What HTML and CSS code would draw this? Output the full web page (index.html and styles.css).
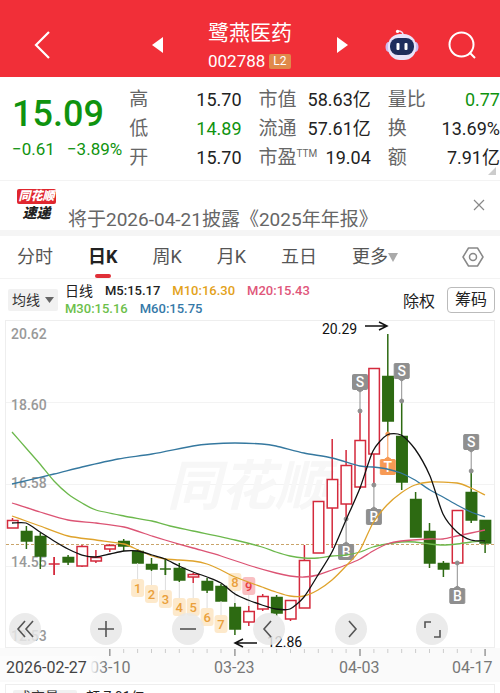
FILE: index.html
```html
<!DOCTYPE html>
<html lang="zh-CN">
<head>
	<meta charset="UTF-8">
	<meta name="viewport" content="width=device-width, initial-scale=1.0">
	<title>鹭燕医药 002788</title>
	<link rel="stylesheet" href="styles.css">
</head>
<body>
	<header class="topbar">
		<button class="icon-button back" aria-label="返回">
			<svg width="18" height="30" viewBox="0 0 18 30"><path d="M16 2 L3 15 L16 28" fill="none" stroke="#fff" stroke-width="2.2"/></svg>
		</button>
		<div class="switcher">
			<button class="icon-button" aria-label="上一只">
				<svg width="11" height="16" viewBox="0 0 11 16"><path d="M11 0 V16 L0 8 Z" fill="#fff"/></svg>
			</button>
			<div class="stock">
				<h1>鹭燕医药</h1>
				<p>002788<span class="level">L2</span></p>
			</div>
			<button class="icon-button" aria-label="下一只">
				<svg width="11" height="16" viewBox="0 0 11 16"><path d="M0 0 V16 L11 8 Z" fill="#fff"/></svg>
			</button>
		</div>
		<div class="tools">
			<button class="icon-button" aria-label="智能助手">
				<svg width="34" height="32" viewBox="0 0 34 32">
					<path d="M18 6 Q18 2 13 2" fill="none" stroke="#f3dcf0" stroke-width="1.6"/>
					<circle cx="12.500" cy="2.400" r="1.600" fill="#fff"/>
					<ellipse cx="3.500" cy="18" rx="3" ry="5" fill="#cdb9ee"/>
					<ellipse cx="30.500" cy="18" rx="3" ry="5" fill="#cdb9ee"/>
					<rect x="3" y="5" width="28" height="26" rx="12" fill="#e8e4fa"/>
					<rect x="5" y="9" width="24" height="17" rx="8" fill="#1e2d5c"/>
					<rect x="11.500" y="14" width="3" height="7" rx="1" fill="#fff"/>
					<rect x="19.500" y="14" width="3" height="7" rx="1" fill="#fff"/>
				</svg>
			</button>
			<button class="icon-button" aria-label="搜索">
				<svg width="28" height="28" viewBox="0 0 28 28"><circle cx="13.500" cy="13.500" r="12" fill="none" stroke="#fff" stroke-width="2"/><path d="M21.500 21.500 L27 27" stroke="#fff" stroke-width="2"/></svg>
			</button>
		</div>
	</header>

	<section class="quote">
		<div class="price">
			<strong>15.09</strong>
			<p><span>−0.61</span><span>−3.89%</span></p>
		</div>
		<dl>
			<div><dt>高</dt><dd>15.70</dd></div>
			<div><dt>低</dt><dd class="down">14.89</dd></div>
			<div><dt>开</dt><dd>15.70</dd></div>
		</dl>
		<dl>
			<div><dt>市值</dt><dd>58.63亿</dd></div>
			<div><dt>流通</dt><dd>57.61亿</dd></div>
			<div><dt>市盈<sup>TTM</sup></dt><dd>19.04</dd></div>
		</dl>
		<dl>
			<div><dt>量比</dt><dd class="down">0.77</dd></div>
			<div><dt>换</dt><dd>13.69%</dd></div>
			<div><dt>额</dt><dd>7.91亿</dd></div>
		</dl>
	</section>

	<section class="news">
		<div class="news-logo"><b>同花顺</b><i>速递</i></div>
		<a href="#report">将于2026-04-21披露《2025年年报》</a>
		<button class="icon-button news-close" aria-label="关闭">
			<svg width="12" height="12" viewBox="0 0 12 12"><path d="M1 1 L11 11 M11 1 L1 11" stroke="#888" stroke-width="1.2"/></svg>
		</button>
	</section>

	<nav class="tabs">
		<button>分时</button>
		<button class="active">日K</button>
		<button>周K</button>
		<button>月K</button>
		<button>五日</button>
		<button>更多<svg width="10" height="9" viewBox="0 0 10 9"><path d="M0 0 H10 L5 9 Z" fill="#aaa"/></svg></button>
		<button class="settings" aria-label="设置">
			<svg width="22" height="20" viewBox="0 0 22 20"><path d="M6.500 1 H15.500 L21 10 L15.500 19 H6.500 L1 10 Z" fill="none" stroke="#888" stroke-width="1.5" stroke-linejoin="round"/><circle cx="11" cy="10" r="3.500" fill="none" stroke="#888" stroke-width="1.5"/></svg>
		</button>
	</nav>

	<section class="legend">
		<button class="picker">均线<svg width="9" height="6" viewBox="0 0 9 6"><path d="M0 0 H9 L4.500 6 Z" fill="#666"/></svg></button>
		<div class="averages">
			<p><span class="period">日线</span><span class="m5">M5:15.17</span><span class="m10">M10:16.30</span><span class="m20">M20:15.43</span></p>
			<p><span class="m30">M30:15.16</span><span class="m60">M60:15.75</span></p>
		</div>
		<button class="adjust">除权</button>
		<button class="chips">筹码</button>
	</section>

	<section class="chart">
		<svg class="kline" viewBox="0 320 500 362" role="img" aria-label="日K线图">
			<defs>
				<linearGradient id="fade">
					<stop offset="0.85" stop-color="#fcfcfc"/>
					<stop offset="1" stop-color="#fcfcfc" stop-opacity="0"/>
				</linearGradient>
			</defs>
			<rect class="axis-band" x="0" y="648" width="500" height="34"/>
			<rect class="frame" x="5.500" y="320.500" width="489" height="327"/>
			<path class="grid" d="M6 402.500 H494 M6 484.500 H494 M6 566.500 H494"/>
			<text class="watermark" x="167" y="505">同花顺</text>
			<g class="scale">
				<text x="11" y="339">20.62</text>
				<text x="11" y="410">18.60</text>
				<text x="11" y="488">16.58</text>
				<text x="11" y="567">14.55</text>
				<text x="11" y="641">12.53</text>
			</g>
			<path class="last" d="M6 544.500 H494"/>
			<g id="candles"></g>
			<g id="badges"></g>
			<g id="markers"></g>
			<g id="averages"></g>
			<g class="extreme">
				<text x="322" y="334">20.29</text>
				<path d="M365 326 H387 M379 322 L387 326 L379 330"/>
				<text x="267" y="647">12.86</text>
				<path d="M257 643 H236 M243 639 L235 643 L243 647"/>
			</g>
			<g id="ticks"></g>
			<g class="dates">
				<text x="90" y="673">03-10</text>
				<text x="214" y="673">03-23</text>
				<text x="339" y="673">04-03</text>
				<text x="452" y="673">04-17</text>
				<rect x="0" y="656" width="106" height="24" fill="url(#fade)"/>
				<text class="first" x="6" y="673">2026-02-27</text>
			</g>
		</svg>
		<div class="chart-controls">
			<button aria-label="最早"><svg viewBox="0 0 32 32"><path d="M16 8 L9 16 L16 24 M24 8 L17 16 L24 24"/></svg></button>
			<button aria-label="放大"><svg viewBox="0 0 32 32"><path d="M16 8 V24 M8 16 H24"/></svg></button>
			<button aria-label="缩小"><svg viewBox="0 0 32 32"><path d="M8 16 H24"/></svg></button>
			<button aria-label="左移"><svg viewBox="0 0 32 32"><path d="M18 8 L11 16 L18 24"/></svg></button>
			<button aria-label="右移"><svg viewBox="0 0 32 32"><path d="M14 8 L21 16 L14 24"/></svg></button>
			<button aria-label="全屏"><svg viewBox="0 0 32 32"><path d="M9 15 V9 H15 M18 24 H24 V17"/></svg></button>
		</div>
	</section>

	<section class="volume">
		<button class="picker">成交量<svg width="9" height="6" viewBox="0 0 9 6"><path d="M0 0 H9 L4.500 6 Z" fill="#666"/></svg></button>
		<span>额:7.91亿</span>
	</section>

	<script>
		// high, low, body top, body bottom, direction
		var candles = [
			[518, 528, 520, 528, 'up'],
			[526, 549, 531, 541, 'down'],
			[533, 569, 536, 556, 'down'],
			[557, 575, 564, 564, 'up'],
			[555, 565, 557, 562, 'down'],
			[545, 567, 546, 566, 'up'],
			[550, 563, 557, 561, 'up'],
			[544, 552, 545, 549, 'up'],
			[539, 551, 541, 546, 'down'],
			[549, 563, 551, 563, 'down'],
			[558, 571, 564, 569, 'down'],
			[558, 575, 569, 569, 'down'],
			[563, 582, 568, 580, 'down'],
			[573, 583, 574, 577, 'up'],
			[578, 593, 581, 590, 'down'],
			[584, 601, 586, 601, 'down'],
			[603, 635, 607, 629, 'down'],
			[606, 626, 611, 622, 'up'],
			[594, 611, 596, 609, 'up'],
			[595, 616, 597, 613, 'down'],
			[600, 621, 600, 619, 'up'],
			[545, 608, 560, 608, 'up'],
			[501, 553, 501, 553, 'up'],
			[439, 548, 479, 508, 'up'],
			[450, 519, 465, 504, 'up'],
			[411, 489, 440, 487, 'up'],
			[368, 485, 368, 454, 'up'],
			[334, 433, 376, 421, 'down'],
			[401, 490, 436, 482, 'down'],
			[492, 537, 499, 537, 'down'],
			[523, 568, 531, 563, 'down'],
			[561, 577, 563, 569, 'down'],
			[510, 563, 510, 563, 'up'],
			[471, 523, 492, 520, 'down'],
			[520, 553, 520, 543, 'down']
		];

		var averages = {
			'm60': [[12,484],[54,474],[82,467],[118,459],[152,454],[193,446],[210,444],[235,443],[262,444],[276,446],[304,453],[332,458],[360,466],[373,467],[387,469],[401,473],[415,480],[430,490],[443,497],[457,505],[471,512],[485,517]],
			'm30': [[12,432],[26,448],[40,464],[54,481],[68,494],[82,503],[96,510],[124,516],[152,521],[170,526],[193,531],[235,540],[262,547],[276,552],[290,556],[304,558],[318,558],[332,556],[346,555],[360,552],[373,547],[387,544],[401,542],[415,542],[430,544],[443,545],[457,544],[471,542],[485,541]],
			'm20': [[12,503],[40,512],[68,520],[96,523],[124,527],[152,536],[165,540],[193,548],[221,556],[248,565],[276,573],[290,576],[304,577],[318,575],[332,570],[346,565],[360,559],[373,551],[387,544],[401,541],[430,539],[443,539],[457,536],[471,533],[485,530]],
			'm10': [[12,516],[26,521],[40,526],[68,536],[96,540],[124,544],[138,550],[152,556],[165,559],[179,560],[193,561],[207,564],[221,570],[235,577],[262,587],[276,592],[290,596],[304,596],[318,590],[332,580],[346,566],[360,550],[373,523],[387,505],[401,493],[415,485],[430,482],[457,483],[471,488],[485,495]],
			'm5': [[12,523],[26,523],[40,532],[54,541],[68,549],[82,555],[96,557],[110,554],[124,551],[138,551],[152,555],[165,559],[179,566],[193,572],[207,577],[221,583],[235,594],[248,600],[262,605],[276,609],[290,609],[304,597],[318,575],[332,552],[346,520],[360,488],[373,451],[387,435],[401,435],[415,449],[430,476],[443,514],[457,532],[471,540],[485,541]]
		};

		// candle index, label centre, dot
		var markers = [
			[24, 552, 519, 'B'],
			[25, 382, 411, 'S'],
			[26, 517, 485, 'B'],
			[27, 467, 434, 'T'],
			[28, 371, 401, 'S'],
			[32, 596, 563, 'B'],
			[33, 442, 471, 'S']
		];

		// nine-turn sequence, starting at candle 9
		var badges = [588, 594, 599, 607, 607, 617, 624, 582, 586];

		// candles that carry a date label
		var dated = [7, 16, 25, 34];

		function xOf(index) {
			return 12.5 + index * 13.9;
		}

		function add(parent, name, attributes, text) {
			var node = document.createElementNS('http://www.w3.org/2000/svg', name);
			for (var key in attributes) {
				node.setAttribute(key, attributes[key]);
			}
			if (text) {
				node.textContent = text;
			}
			document.getElementById(parent).appendChild(node);
		}

		// smooth line through all points
		function curve(points) {
			var d = 'M' + points[0];
			for (var i = 0; i < points.length - 1; i++) {
				var a = points[i - 1] || points[i];
				var b = points[i];
				var c = points[i + 1];
				var e = points[i + 2] || c;
				d += ' C' + [b[0] + (c[0] - a[0]) / 8, b[1] + (c[1] - a[1]) / 8, c[0] - (e[0] - b[0]) / 8, c[1] - (e[1] - b[1]) / 8, c[0], c[1]];
			}
			return d;
		}

		candles.forEach(function(candle, i) {
			var x = xOf(i);
			var major = dated.indexOf(i) >= 0;
			add('candles', 'path', {'class': candle[4], 'd': 'M' + x + ' ' + candle[0] + ' V' + candle[2] + ' M' + x + ' ' + candle[3] + ' V' + candle[1]});
			if (candle[2] === candle[3]) {
				add('candles', 'path', {'class': candle[4], 'd': 'M' + (x - 5.5) + ' ' + candle[2] + ' h11 M' + x + ' ' + candle[0] + ' V' + candle[1]});
			} else {
				add('candles', 'rect', {'class': candle[4], 'x': x - 5, 'y': candle[2] + 0.5, 'width': 10.5, 'height': candle[3] - candle[2] - 0.5});
			}
			if (i >= 7) {
				add('ticks', 'path', {'d': 'M' + x + ' 649 v' + (major ? 7 : 4), 'class': major ? 'major' : 'minor'});
			}
		});

		badges.forEach(function(y, i) {
			var x = xOf(i + 9);
			var kind = i === 8 ? 'nine' : 'count';
			add('badges', 'path', {'class': 'lead', 'd': 'M' + x + ' ' + candles[i + 9][i < 7 ? 1 : 0] + ' V' + y});
			add('badges', 'rect', {'class': kind, 'x': x - 6.5, 'y': y - 9, 'width': 13, 'height': 18, 'rx': 3});
			add('badges', 'text', {'class': kind, 'x': x, 'y': y + 5}, String(i + 1));
		});

		for (var name in averages) {
			add('averages', 'path', {'class': name, 'd': curve(averages[name])});
		}

		markers.forEach(function(marker) {
			var x = xOf(marker[0]);
			var kind = marker[3] === 'T' ? 'trade' : 'deal';
			var side = marker[1] > marker[2] ? -1 : 1;
			add('markers', 'path', {'class': kind, 'd': 'M' + x + ' ' + marker[1] + ' V' + marker[2]});
			add('markers', 'circle', {'class': kind, 'cx': x, 'cy': marker[2], 'r': 2});
			add('markers', 'rect', {'class': kind, 'x': x - 7.5, 'y': marker[1] - 7.5, 'width': 15, 'height': 15, 'rx': 1});
			add('markers', 'path', {'class': kind, 'd': 'M' + (x - 3) + ' ' + (marker[1] + side * 8) + ' h6 l-3 ' + side * 2 + ' Z'});
			add('markers', 'text', {'x': x, 'y': marker[1] + 5}, marker[3]);
		});
	</script>
</body>
</html>
```
FILE: styles.css
```css
html {
	box-sizing: border-box;
}

*, *:before, *:after {
	box-sizing: inherit;
}

body {
	margin: 0;
	background: #fff;
	color: #222;
	font-family: Roboto, "Noto Sans CJK SC", sans-serif;
}

h1, p, dl, dd {
	margin: 0;
}

button {
	padding: 0;
	border: 0;
	background: none;
	color: inherit;
	font: inherit;
	white-space: nowrap;
	cursor: pointer;
}

svg {
	display: block;
}

/* top bar */

.topbar {
	display: grid;
	grid-template-columns: 1fr auto 1fr;
	align-items: center;
	padding: 17px 24px 4px 33px;
	background: #f12f38;
	color: #fff;
}

.back {
	justify-self: start;
}

.switcher {
	display: flex;
	align-items: center;
	gap: 45px;
	margin-left: -9px;
}

.stock h1 {
	font-size: 21px;
	font-weight: 400;
	line-height: 32px;
}

.stock p {
	display: flex;
	align-items: center;
	gap: 4px;
	font-size: 17px;
	line-height: 24px;
}

.level {
	padding: 0 4px;
	border-radius: 2px;
	background: #e0894a;
	font-size: 12px;
	line-height: 15px;
}

.tools {
	display: flex;
	align-items: center;
	justify-content: flex-end;
	gap: 29px;
}

/* quote */

.quote {
	position: relative;
	display: grid;
	grid-template-columns: minmax(0, 1fr) minmax(0, 1fr) minmax(0, 1fr) minmax(0, 1fr);
	column-gap: 17px;
	padding: 8px 0;
	border-bottom: 1px solid #f3f3f3;
}

.quote:after {
	content: "";
	position: absolute;
	right: 4px;
	bottom: 5px;
	border-left: 8px solid transparent;
	border-bottom: 8px solid #ccc;
}

.price {
	padding: 8px 0 0 12px;
	color: #0f930f;
	white-space: nowrap;
}

.price strong {
	display: block;
	font-size: 36px;
	font-weight: 500;
	line-height: 42px;
}

.price p {
	display: flex;
	gap: 12px;
	font-size: 17px;
	line-height: 28px;
}

.quote dl > div {
	display: flex;
	justify-content: space-between;
	line-height: 29px;
	white-space: nowrap;
}

.quote dt {
	color: #666;
	font-size: 19px;
}

.quote dd {
	font-size: 18px;
}

.quote sup {
	font-size: 10px;
	line-height: 10px;
}

.quote .down {
	color: #0f930f;
}

/* news strip */

.news {
	display: flex;
	align-items: flex-start;
	gap: 12px;
	padding: 8px 15px 0 17px;
	border-bottom: 6px solid #f5f5f5;
}

.news-logo {
	width: 39px;
	font-size: 12px;
	line-height: 15px;
	text-align: center;
	font-style: italic;
	font-weight: 900;
}

.news-logo b,
.news-logo i {
	display: block;
}

.news-logo b {
	border-radius: 2px;
	background: #e0262e;
	color: #fff;
}

.news-logo i {
	font-size: 14px;
	line-height: 18px;
}

.news a {
	flex: 1;
	padding-top: 21px;
	color: #666;
	font-size: 19px;
	line-height: 20px;
	text-decoration: none;
	white-space: nowrap;
}

.news-close {
	padding-top: 10px;
}

/* tabs */

.tabs {
	display: flex;
	gap: 35px;
	padding: 0 16px 0 17px;
	border-bottom: 1px solid #f3f3f3;
	color: #555;
	font-size: 18px;
	line-height: 42px;
}

.tabs button {
	position: relative;
	display: flex;
	align-items: center;
}

.tabs .active {
	color: #222;
	font-weight: 700;
}

.tabs .active:after {
	content: "";
	position: absolute;
	bottom: 0;
	left: 50%;
	width: 16px;
	height: 4px;
	margin-left: -8px;
	border-radius: 2px;
	background: #e03038;
}

.tabs .settings {
	margin-left: auto;
}

/* moving averages */

.legend {
	display: flex;
	align-items: center;
	padding: 3px 5px 2px 8px;
}

.picker {
	display: flex;
	align-items: center;
	gap: 5px;
	padding: 0 4px;
	border-radius: 2px;
	background: #f1f1f1;
	color: #333;
	font-size: 14px;
	line-height: 22px;
}

.averages {
	flex: 1;
	padding-left: 7px;
	font-size: 13px;
	font-weight: 500;
	line-height: 18px;
}

.averages p {
	display: flex;
	gap: 12px;
}

.averages .period {
	font-size: 14px;
	font-weight: 400;
}

.averages .m10 { color: #e3a21a; }
.averages .m20 { color: #e0567a; }
.averages .m30 { color: #6cc04a; }
.averages .m60 { color: #3579a8; }

.adjust {
	margin-right: 12px;
	font-size: 16px;
}

.chips {
	padding: 0 7px;
	border: 1px solid #bbb;
	border-radius: 4px;
	font-size: 16px;
	line-height: 24px;
}

/* chart */

.chart {
	position: relative;
}

.kline {
	width: 100%;
	height: auto;
}

.axis-band { fill: #fafafa; }
.frame { fill: #fff; stroke: #eee; }
.grid { stroke: #f3f3f3; }
.last { stroke: #c9a46a; stroke-dasharray: 3 2; }

.watermark {
	fill: #f7f7f7;
	font-size: 54px;
	font-style: italic;
	font-weight: 700;
}

.scale {
	fill: #999;
	font-size: 14px;
	font-weight: 500;
}

#candles .up {
	fill: #fff;
	stroke: #d42a3c;
	stroke-width: 1.5;
}

#candles path.up {
	fill: none;
}

#candles .down {
	fill: #2d6a12;
	stroke: #2d6a12;
	stroke-width: 1.5;
}

#averages path {
	fill: none;
	stroke-width: 1.3;
}

#averages .m5 { stroke: #111; }
#averages .m10 { stroke: #dfa32c; }
#averages .m20 { stroke: #dc5474; }
#averages .m30 { stroke: #6cb84c; }
#averages .m60 { stroke: #35789f; }

#badges .lead {
	stroke: #ddd;
}

#badges rect.count { fill: #fde9cb; }
#badges rect.nine { fill: #f9bfc2; }

#badges text {
	fill: #eaa03c;
	font-size: 13px;
	font-weight: 500;
	text-anchor: middle;
}

#badges text.nine { fill: #e83a44; }

#markers .deal {
	fill: #8f8f8f;
	stroke: #8f8f8f;
}

#markers .trade {
	fill: #f79a55;
	stroke: #f79a55;
}

#markers text {
	fill: #fff;
	font-size: 14px;
	font-weight: 500;
	text-anchor: middle;
}

.extreme {
	font-size: 14px;
	fill: #111;
}

.extreme path {
	fill: none;
	stroke: #111;
	stroke-width: 1.5;
}

#ticks .minor { stroke: #ccc; }
#ticks .major { stroke: #999; stroke-width: 1.5; }

.dates {
	fill: #777;
	font-size: 16px;
}

.dates .first {
	fill: #444;
}

.chart-controls {
	position: absolute;
	right: 52px;
	bottom: 37px;
	left: 9px;
	display: flex;
	justify-content: space-between;
}

.chart-controls button {
	width: 32px;
	height: 32px;
	border-radius: 50%;
	background: rgba(232, 232, 232, .85);
}

.chart-controls path {
	fill: none;
	stroke: #555;
	stroke-width: 1.6;
}

/* volume */

.volume {
	display: flex;
	gap: 9px;
	margin: 2px 5px 0;
	padding: 5px 7px;
	border: 1px solid #eee;
	font-size: 14px;
	line-height: 14px;
}

.volume .picker {
	line-height: 14px;
}
```
